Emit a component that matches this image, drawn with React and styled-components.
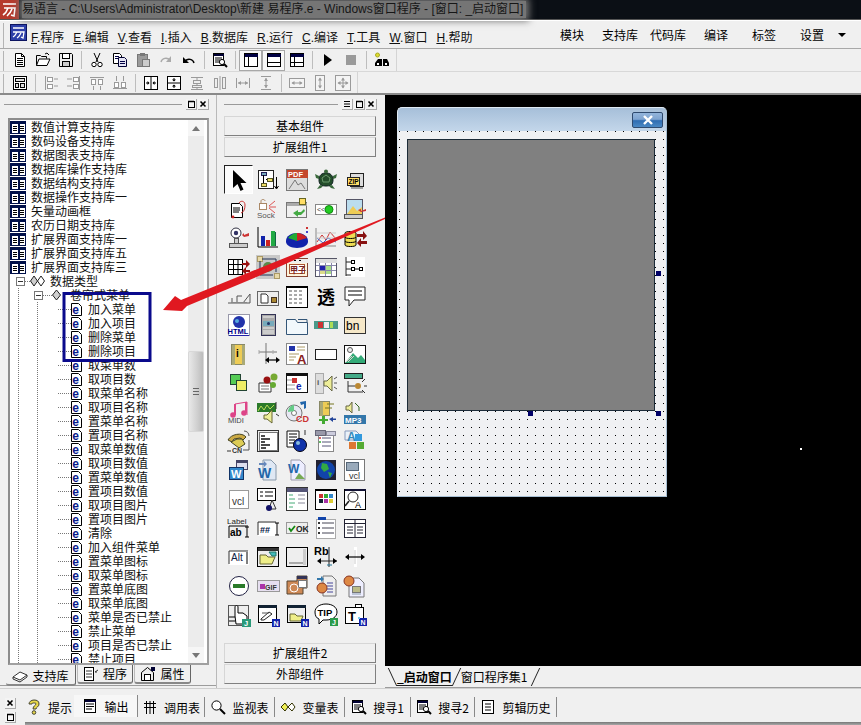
import React from 'react';
import styled, { createGlobalStyle } from 'styled-components';

const CJK = '"Noto Sans CJK SC", "Liberation Sans", sans-serif';
const LATIN = '"Liberation Sans", "Noto Sans CJK SC", sans-serif';

const GlobalStyle = createGlobalStyle`
  html, body { margin: 0; padding: 0; background: #000; }
  body { font-family: ${LATIN}; font-size: 12px; color: #000; }
`;

const r = (x, y, w, h, fill = 'none', stroke) => (
  <rect x={x} y={y} width={w} height={h} fill={fill} stroke={stroke} shapeRendering="crispEdges" />
);
const l = (d, stroke = '#000', sw = 1) => <path d={d} fill="none" stroke={stroke} strokeWidth={sw} />;
const f = (d, fill = '#000', stroke) => <path d={d} fill={fill} stroke={stroke} />;
const c = (x, y, rad, fill = 'none', stroke) => <circle cx={x} cy={y} r={rad} fill={fill} stroke={stroke} />;
const t = (x, y, size, s, fill = '#000', weight = 400) => (
  <text x={x} y={y} fontSize={size} fill={fill} fontWeight={weight} fontFamily="Liberation Sans, Noto Sans CJK SC, sans-serif">{s}</text>
);

// toolbar glyphs, 16 box
const G = '#9a9a9a';
const TOOLS = {
  doc: <>{f('M3.5 1.5h6l3 3v10h-9z', '#fff', '#000')}{l('M9.5 1.5v3h3M5 6.5h6M5 8.5h6M5 10.5h6M5 12.5h6')}</>,
  open: <>{l('M1.5 13.5v-10h4l1 1h5v2')}{f('M1.5 13.5l2.5-6.5h11l-3 6.5z', '#fff', '#000')}{l('M10 2l2-1 2 2')}</>,
  save: <>{f('M1.5 1.5h12l1 1v12h-13z', '#eee', '#000')}{r(4.5, 1.5, 7, 5, '#fff', '#000')}{r(4.5, 9.5, 7, 5, '#ccc', '#000')}</>,
  cut: <>{l('M5 1l4 9M11 1l-4 9')}{c(5, 12.5, 2.2, '#fff', '#000')}{c(11, 12.5, 2.2, '#fff', '#000')}</>,
  copy: <>{f('M1.5 1.5h6l2 2v8h-8z', '#fff', '#000')}{f('M6.5 5.5h6l2 2v7h-8z', '#e4e4f4', '#003')}{l('M3 4.5h4M3 6.5h3M8 9.5h5M8 11.5h5', '#004')}</>,
  paste: <>{r(2.5, 2.5, 10, 12, G, '#777')}{r(5, 1, 5, 3, '#777')}{r(7.5, 7.5, 7, 7, '#ccc', '#777')}</>,
  redo: <>{l('M3 10c1-4 6-5 9-2', '#aaa', 1.4)}{f('M13 4v6h-5z', '#aaa')}</>,
  undo: <>{l('M13 11c-1-4-6-5-9-2', '#000', 1.4)}{f('M2 5v6h6z')}</>,
  find: <>{r(1.5, 1.5, 10, 12, '#fff', '#000')}{r(1.5, 1.5, 10, 2, '#003')}{l('M3 6h7M3 8h5M3 10h4')}{c(10, 10, 2.6, '#fff', '#000')}{l('M12 12l3 3', '#000', 2)}</>,
  lay1: <>{r(1.5, 1.5, 13, 13, '#fff', '#000')}{r(1.5, 1.5, 13, 3, '#004')}{l('M5.5 4.5v10')}</>,
  lay2: <>{r(1.5, 1.5, 13, 13, '#fff', '#000')}{r(1.5, 1.5, 13, 3, '#004')}{l('M1.5 10.5h13')}</>,
  lay3: <>{r(1.5, 1.5, 13, 13, '#fff', '#000')}{r(1.5, 1.5, 13, 3, '#004')}{l('M5.5 4.5v10M1.5 10.5h13')}</>,
  play: f('M4 2l8 6-8 6z'),
  stop: r(3, 3, 10, 10, G),
  binoc: <>{c(3.5, 3, 2, '#dd3', '#aa2')}{f('M4 7h4v7H1v-3zM9 7h4l2 4v3H9z')}{r(6, 9, 4, 2)}{r(3, 11, 2, 2, '#fff')}{r(11, 11, 2, 2, '#fff')}</>,
  form: <>{r(1.5, 1.5, 13, 13, '#fff', '#000')}{r(3.5, 3.5, 9, 3, '#ddd', '#000')}{r(3.5, 8.5, 3, 4, '#ddd', '#000')}{r(8.5, 8.5, 4, 4, '#ddd', '#000')}</>,
  al: <>{l('M2.5 1v14', G)}{r(4.5, 2.5, 5, 4, '#fff', G)}{r(4.5, 9.5, 5, 4, '#fff', G)}{l('M11 4h4M11 11h4', G)}</>,
  ar: <>{l('M13.5 1v14', G)}{r(7.5, 2.5, 5, 4, '#fff', G)}{r(7.5, 9.5, 5, 4, '#fff', G)}{l('M1 4h5M1 11h5', G)}</>,
  at: <>{l('M1 2.5h14', G)}{r(2.5, 4.5, 4, 5, '#fff', G)}{r(9.5, 4.5, 4, 5, '#fff', G)}{l('M4.5 11v4M11.5 11v4', G)}</>,
  ab: <>{l('M1 13.5h14', G)}{r(2.5, 7.5, 4, 5, '#fff', G)}{r(9.5, 7.5, 4, 5, '#fff', G)}{l('M4.5 1v5M11.5 1v5', G)}</>,
  ch: <>{r(1.5, 1.5, 13, 13, '#fff', '#000')}{l('M8 1.5v13')}{l('M3 8h3M10 8h3')}{f('M6.5 8l-2-2v4zM9.5 8l2-2v4z')}</>,
  cv: <>{r(1.5, 1.5, 13, 13, '#fff', '#000')}{l('M1.5 8h13')}{l('M8 3v3M8 10v3')}{f('M8 6.5l-2-2h4zM8 9.5l-2 2h4z')}</>,
  cg: <>{l('M2 2.5h12M2 14.5h12M8 2v12', G)}{r(4.5, 5.5, 7, 3, '#eee', G)}{r(3.5, 10.5, 9, 2, '#eee', G)}</>,
  cu: <>{l('M8 1v14', G)}{r(2.5, 3.5, 3, 9, '#eee', G)}{r(10.5, 2.5, 3, 11, '#eee', G)}</>,
  sh: <>{l('M1.5 3v10M14.5 3v10M3 8h10', G)}{f('M3 8l3-2v4zM13 8l-3-2v4z', G)}</>,
  sv: <>{l('M3 1.5h10M3 14.5h10M8 3v10', G)}{f('M8 3l-2 3h4zM8 13l-2-3h4z', G)}</>,
  ew: <>{r(0.5, 3.5, 15, 9, '#f4f4f4', G)}{l('M3 8h10', G)}{f('M2.5 8l3-2v4zM13.5 8l-3-2v4z', G)}</>,
  eh: <>{r(3.5, 0.5, 9, 15, '#f4f4f4', G)}{l('M8 3v10', G)}{f('M8 2.5l-2 3h4zM8 13.5l-2-3h4z', G)}</>,
  eb: <>{r(0.5, 0.5, 15, 15, '#f4f4f4', G)}{l('M3 8h10M8 3v10', G)}{f('M2.5 8l3-2v4zM13.5 8l-3-2v4zM8 2.5l-2 3h4zM8 13.5l-2-3h4z', G)}</>,
};

const BAR_ICONS = {
  hint: <>{f('M8 1c-3 0-5 2-5 4h3c0-1 1-1 2-1s2 0 2 1-3 2-3 5h3c0-2 3-2 3-5s-2-4-5-4z', '#e8d84a', '#443')}{c(8, 13.5, 1.8, '#e8d84a', '#443')}</>,
  output: <>{r(2.5, 1.5, 11, 13, '#fff', '#000')}{r(2.5, 1.5, 11, 2, '#003')}{l('M4 6h8M4 8.5h8M4 11h6')}</>,
  calls: l('M4.5 2v13M8 2v13M11.5 2v13M2 4.5h12M2 8.5h12', '#000'),
  watch: <>{c(6.5, 6.5, 4.6, '#fff', '#000')}{l('M10 10l5 5', '#000', 2)}</>,
  vars: <>{f('M1 8l4-4 3 4-3 4z', '#ee5', '#330')}{f('M8 8l4-4 3 4-3 4z', '#fff', '#330')}</>,
  find: TOOLS.find,
  clip: <>{r(2.5, 1.5, 11, 13, '#fff', '#000')}{l('M5 5h6M5 8h6M5 11h6')}</>,
};

const xClose = <>{l('M2.5 2.5l5 5M7.5 2.5l-5 5', '#000', 1.6)}</>;

// component palette, 24 box, 16 rows by 5
const PALETTE = [
  f('M6 2v18l4.5-4 3 7 3-1.4-3-6.6h6z'),
  <>{r(2.5, 2.5, 15, 18, '#fff', '#222')}{r(5, 4, 5, 3, '#7ab', '#225')}{r(11, 10, 5, 3, '#ed6', '#552')}{r(5, 15, 5, 3, '#ed6', '#552')}{l('M7.5 7v8M10 11.5h1')}{l('M20.5 9v11M18.5 18l2 3 2-3')}</>,
  <>{r(1.5, 1.5, 21, 21, '#ddd', '#777')}{r(1.5, 1.5, 21, 8, '#c4472c')}{t(3, 8.5, 7.5, 'PDF', '#fff', 700)}{l('M4 21l6-9 3 5 3-2 4 6', '#777')}</>,
  <>{f('M5 12c0-5 3-7 7-7s7 2 7 7-3 6-7 6-7-1-7-6z', '#234d2a', '#122')}{c(12, 3.5, 2, '#3a6a3c')}{f('M5 8L1 6l1 4 3 1zM19 8l4-2-1 4-3 1zM6 17l-3 4 4-1 2-2zM18 17l3 4-4-1-2-2z', '#3a6a3c')}{l('M8 10l4-3 4 3-1 4H9z', '#6b9a6c')}</>,
  <>{r(7.5, 5.5, 13, 13, '#ddd', '#222')}{r(4.5, 9.5, 12, 8, '#fd6', '#222')}{t(5.5, 16, 6.5, 'ZIP', '#000', 700)}{l('M8 20h12', '#555')}</>,

  <>{f('M4.5 6.5h8l3 3v11h-11z', '#fff', '#000')}{l('M6 11h7M6 13h7M6 15h6')}{l('M12 6c2-3 6-2 6 2s-1 7-4 8', '#c33')}{c(6, 20, 1.4, '#c22')}</>,
  <>{r(3.5, 6.5, 7, 6, '#fff', '#a86')}{l('M5 6V4c0-2 4-2 4 0', '#a86')}{l('M13 9l6-5M13 10h7M13 11l6 5', '#d55')}{t(1, 21, 8, 'Sock', '#555')}</>,
  <>{r(1.5, 5.5, 20, 15, '#f0f0f0', '#777')}{r(1.5, 5.5, 20, 3, '#aaa')}{f('M8 16l5-3v2h3l3-3 1 2-4 4h-3v2z', '#4a4')}{r(14.5, 1.5, 6, 6, '#fd6', '#662')}</>,
  <>{r(1.5, 7.5, 21, 10, '#fff', '#888')}{t(3, 15, 7, '<<', '#444')}{c(15, 12.5, 4, '#2c2', '#181')}</>,
  <>{r(3.5, 2.5, 16, 15, '#bde', '#556')}{f('M4 17l6-8 4 5 5-4v7z', '#ec5')}{r(1.5, 17.5, 18, 4, '#ccc', '#555')}{f('M23 12l-5 2v-2l-3 1 3 2 5-1z', '#c33')}</>,

  <>{c(9, 7, 5, '#fff', '#334')}{c(9, 7, 2.2, '#336')}{r(2.5, 17.5, 18, 4, '#ccc', '#555')}{r(7, 12, 4, 5, '#ccc', '#555')}{f('M22 7l-5 2v-2l-2 2 2 2 5-1z', '#c33')}</>,
  <>{l('M2 1v20h20')}{r(5, 10, 4, 10, '#12a')}{r(10, 14, 4, 6, '#c22')}{r(15, 5, 4, 15, '#2a4')}{l('M19.5 6v14', '#164')}</>,
  <>{f('M1 15c0-5 5-8 11-8s11 3 11 8v1c0 3-5 6-11 6s-11-3-11-6z', '#12a')}{f('M12 15l-9-3c2-3 6-5 9-5z', '#2a3')}{f('M12 15V7c4 0 8 2 10 5z', '#c22')}{r(21, 1, 2, 2, '#c33')}{r(21, 5, 2, 2, '#44c')}</>,
  <>{l('M2 2v18h20', '#888')}{l('M3 16l5-7 4 5 4-8 6 7', '#c33')}{l('M3 12l6 5 5-5 8 4', '#36c')}{l('M3 7h19M3 12h19', '#ccc')}</>,
  <>{f('M2 7c0-2 11-2 11 0v12c0 2-11 2-11 0z', '#ed5', '#000')}{l('M2 11c0 2 11 2 11 0M2 15c0 2 11 2 11 0')}{f('M14 8h6V5l4 5-4 4v-3h-6z', '#811')}{f('M24 15h-6v-3l-4 5 4 4v-3h6z', '#811')}</>,

  <>{r(1.5, 4.5, 14, 15, '#fff', '#000')}{l('M1.5 9.5h14M1.5 14.5h14M6.5 4.5v15M11 4.5v15')}{f('M15 8h4V5l4 4-4 4v-3h-4z', '#911')}{f('M23 15h-4v-3l-4 4 4 4v-3h4z', '#911')}</>,
  <>{r(0, 0, 24, 24, '#c8c8c8')}{r(1, 1, 5, 5, '#e7d9a8', '#a96')}{r(18, 18, 5, 5, '#e7d9a8', '#a96')}{l('M6 4h14v13M4 6v14h13', '#235')}{c(12, 12, 5, '#5a8a4a')}</>,
  <>{r(1.5, 3.5, 21, 18, '#fdf4dc', '#843')}{r(1.5, 3.5, 21, 4, '#eee')}{l('M4 5.5h2M9 5.5h2M14 5.5h2')}{r(4.5, 9.5, 15, 9, '#fff', '#a53')}{t(5, 17.5, 8, '甲子', '#722', 700)}</>,
  <>{r(1.5, 3.5, 21, 18, '#fff', '#556')}{r(1.5, 3.5, 21, 4, '#ddd')}{r(6, 11, 5, 4, '#22a')}{r(12, 11, 5, 4, '#ad8')}{r(6, 16, 5, 3, '#dd8')}{r(12, 16, 5, 3, '#ad8')}{l('M5.5 8v13M11.5 8v13M17.5 8v13M2 10.5h20M2 15.5h20', '#88a')}</>,
  <>{r(2, 2, 20, 20, '#fff')}{l('M3 2v19h0M3 7h5M3 14h5M3 20h5', '#222')}{r(8.5, 5.5, 3, 3, '#fff', '#000')}{r(8.5, 12.5, 3, 3, '#fff', '#000')}{r(16.5, 12.5, 3, 3, '#fff', '#000')}{l('M12 14h4')}</>,

  <>{l('M1 19h22v-9l-7 9M15 12h-5v7M5 14v5', '#555')}{r(4, 18, 16, 1, '#888')}</>,
  <>{r(1.5, 7.5, 21, 14, '#eee', '#666')}{f('M5 10h5l2 2v7H5z', '#fff', '#333')}{r(15.5, 13.5, 5, 5, '#a83', '#432')}</>,
  <>{r(1.5, 2.5, 21, 21, '#fff', '#000')}{r(1.5, 1.5, 21, 2, '#000')}{l('M4 7h3M9 7h3M14 7h3M4 11h3M9 11h3M14 11h3M4 15h3M9 15h3M14 15h3M4 19h3M9 19h3M14 19h3', '#555')}</>,
  t(3, 20, 18, '透', '#000', 700),
  <>{f('M2 3h20v13H11l-5 6v-6H2z', '#fff', '#222')}{l('M5 7h14M5 11h14')}</>,

  <>{r(1.5, 1.5, 21, 21, '#fff', '#99a')}{c(12, 9, 6, '#23a')}{c(10, 8, 2, '#5ad')}{t(0.5, 21, 7.5, 'HTML', '#008', 700)}{l('M2 22.5h20', '#22a')}</>,
  <>{r(5.5, 1.5, 14, 21, '#aaa', '#335')}{r(7, 8, 11, 5, '#7ab')}{c(12.5, 10.5, 1.5, '#236')}{l('M7 4h11M7 15h11M7 18h11M7 20h11', '#eee')}</>,
  <>{f('M1.5 6.5h9l2 3h10v12h-21z', '#f2f8fc', '#357')}{l('M13 6.5h9v3', '#357')}</>,
  <>{r(0, 8, 24, 8, '#4a9a8a')}{r(4, 9, 5, 6, '#c33')}{r(10, 9, 5, 6, '#eee')}{r(16, 9, 3, 6, '#ad5')}</>,
  <>{r(1.5, 4.5, 21, 16, '#f6e8c8', '#333')}{t(3, 17, 12, 'bn', '#000')}</>,

  <>{r(4.5, 2.5, 13, 20, '#ec5', '#886')}{r(4.5, 2.5, 3, 20, '#aa7')}{r(14.5, 2.5, 3, 20, '#aa7')}{t(9, 15, 10, 'i', '#000', 700)}</>,
  <>{l('M10 1v21M3 10h18', '#777')}{l('M3 8v4M17 8v4', '#aaa')}{l('M11 18h11', '#000', 1.2)}{f('M9 18l4-3v6zM24 18l-4-3v6z')}</>,
  <>{r(1.5, 1.5, 21, 21, '#fff', '#888')}{r(4, 4, 6, 5, '#23a')}{l('M12 5h8M12 8h8M4 12h10M4 15h7M4 18h5', '#a96')}{t(12, 22, 13, 'A', '#822', 700)}</>,
  <>{r(1.5, 7.5, 21, 10, '#fff', '#222')}{r(5, 11, 2, 2)}{r(11, 11, 2, 2)}{r(17, 11, 2, 2)}</>,
  <>{r(1.5, 3.5, 21, 18, '#fff', '#111')}{f('M2 21l8-10 5 5 3-3 4 5v3z', '#3a7')}{c(7, 8, 2.5, '#eee', '#555')}{l('M3 20l6-6M5 20l6-6', '#dcc')}</>,

  <>{r(3.5, 3.5, 10, 10, '#5c5', '#243')}{r(9.5, 9.5, 10, 10, '#ee6', '#243')}</>,
  <>{f('M3 12l12 0 0 9H3z', '#fff', '#333')}{c(11, 9, 3.5, '#911')}{c(18, 6, 3.5, '#7a3')}{c(17, 14, 3, '#6a3')}{l('M5 15h8M5 18h8', '#777')}</>,
  <>{r(1.5, 2.5, 21, 19, '#fff', '#111')}{r(1.5, 2.5, 21, 2, '#111')}{r(7, 7, 5, 5, '#c33')}{t(11, 19, 10, 'e', '#12a', 700)}{l('M2 9h5M2 14h8M2 18h8', '#999')}</>,
  <>{r(1.5, 2.5, 8, 20, '#ddd', '#aaa')}{t(3, 14, 8, 'i', '#555', 700)}{f('M10 10h3l5-5v15l-5-5h-3z', '#ee9', '#664')}{l('M20 8l3-2M20 12h3M20 16l3 2', '#555')}</>,
  <>{r(1.5, 2.5, 18, 5, '#4a8', '#222')}{l('M5 10v11h15M5 15h7', '#333')}{c(15, 15, 3, '#b83')}{l('M19 11l3-3M19 19l3 3M21 15h3', '#333')}</>,

  <>{f('M8 4l12-2v13', 'none', '#d48')}{r(7, 4, 2, 11, '#d48')}{r(18, 2, 2, 11, '#d48')}{c(6, 15, 2.8, '#d48')}{c(17, 13, 2.8, '#d48')}{t(1, 23, 7.5, 'MIDI', '#444')}</>,
  <>{r(1, 3, 19, 9, '#2b7a2a')}{l('M2 11l3-5 3 4 3-5 3 4 4-4', '#bd5')}{f('M8 15h3l5-5v13l-5-4H8z', '#ee9', '#663')}{l('M20 2v7M20 14l3 2', '#333')}</>,
  <>{c(9, 13, 8, '#e8e8f4', '#777')}{c(9, 13, 2.5, '#fff', '#777')}{f('M9 5v6l-6 1c0-4 3-7 6-7z', '#6c8')}{t(11, 22, 9, 'CD', '#c33', 700)}{f('M15 2l6-1v7l-2 1V4l-3 1z', '#26a')}</>,
  <>{r(5.5, 1.5, 10, 14, '#ec5', '#886')}{r(5.5, 1.5, 3, 14, '#aa7')}{l('M13 4h7M11 8h7', '#772')}{f('M8 16h3v3h3v2h-3v3H8v-3H5v-2h3z', '#4a3')}{f('M15 19l4-2v1.5h3v1.5h-3v2z', '#249')}</>,
  <>{f('M3 6h3l3-4v11l-3-3H3z', '#ee9', '#664')}{l('M12 3l4 4v4', '#362')}{r(1, 15, 22, 9, '#37a')}{t(2, 23, 8, 'MP3', '#fff', 700)}</>,

  <>{f('M1 11c3-6 14-8 18-3l-3 3-3-2-6 1-2 3z', '#ca4', '#442')}{f('M4 13l6-3h5l3 5-6 4z', '#dc5', '#442')}{l('M17 2c3 0 5 2 5 5M22 11v10h-6', '#555')}{t(5, 24, 7, 'CN', '#333', 700)}{l('M0 22h4', '#333')}</>,
  <>{r(1.5, 1.5, 21, 21, '#eee', '#333')}{r(3, 3, 18, 18, '#fff', '#777')}{l('M5 7h4M5 10h9M5 13h4M5 16h9M5 19h5', '#111', 1.5)}</>,
  <>{f('M2 2h12v16H2z', '#fff', '#111')}{l('M4 5h8M4 8h8M4 11h6M4 14h5')}{c(15, 16, 6.5, '#13a', '#001')}{c(13, 14, 2, '#8bd')}{l('M20 1v5', '#333')}</>,
  <>{r(4.5, 3.5, 15, 19, '#fff', '#888')}{r(1, 1, 10, 5, '#99a', '#667')}{r(12, 2, 9, 4, '#ccd', '#889')}{l('M8 9h9M8 13h9M8 17h9', '#557')}{c(6, 9, 1, '#c33')}{c(6, 13, 1, '#3a3')}</>,
  <>{f('M2 2h11l4 4v5H2z', '#eaf2fa', '#89b')}{t(4, 12, 12, 'A', '#38b', 700)}{r(12, 5, 7, 7, '#39d')}{r(6, 13, 7, 7, '#d73')}{r(14, 13, 7, 7, '#5a3')}</>,

  <>{r(9.5, 2.5, 11, 9, '#dde', '#446')}{r(9.5, 2.5, 11, 2, '#446')}{r(2.5, 9.5, 14, 12, '#38c', '#136')}{t(4, 20, 11, 'W', '#fff', 700)}</>,
  <>{f('M7 2h8l5 5v15H7z', '#dfe8f4', '#89a')}{t(2, 20, 14, 'W', '#26a', 700)}{f('M3 5h5V3l3 3-3 3V7H3z', '#68b')}</>,
  <>{f('M6 2h9l5 5v15H6z', '#eef', '#99a')}{t(3, 15, 12, 'W', '#26a', 700)}{f('M10 21l4-6 3 3 3 3z', '#7a5')}</>,
  <>{r(2, 2, 20, 20, '#223')}{c(12, 12, 9, '#14a')}{f('M8 5l5 1 2 5-5 3-3-4zM14 14l4 1-2 5z', '#3a4')}</>,
  <>{r(1.5, 1.5, 20, 21, '#fff', '#777')}{r(3.5, 4, 12, 8, '#9ab', '#567')}{t(6, 21, 9, 'vcl', '#333')}</>,

  <>{r(2.5, 3.5, 19, 18, '#fff', '#999')}{t(5, 18, 10, 'vcl', '#333')}</>,
  <>{r(1.5, 1.5, 18, 12, '#fff', '#000')}{l('M4 5h3M4 9h3M9 5h8M9 9h8')}{l('M16 13l-3 9h7z', '#333')}{c(13, 21, 3, '#116')}</>,
  <>{r(1.5, 0.5, 21, 23, '#fff', '#333')}{r(1.5, 0.5, 21, 4, '#557')}{l('M4 8h4M4 12h6M4 16h6M4 20h4', '#4a7')}{l('M13 8h7M13 12h7M13 16h7', '#889')}</>,
  <>{r(1.5, 2.5, 21, 20, '#fff', '#000')}{r(1.5, 1.5, 21, 2, '#000')}{r(5, 7, 4, 4, '#c33')}{r(10, 7, 4, 4, '#3a3')}{r(15, 7, 4, 4, '#38c')}{r(5, 12, 4, 4, '#123')}{r(10, 12, 4, 4, '#a3a')}{r(15, 12, 4, 4, '#dc3')}</>,
  <>{r(1.5, 2.5, 21, 20, '#fff', '#000')}{r(1.5, 1.5, 21, 2, '#113')}{c(10, 10, 5, '#fff', '#222')}{l('M6 14l-4 5', '#222', 1.6)}{t(12, 21, 9, 'A', '#000')}</>,

  <>{t(0, 8, 8, 'Label', '#222')}{r(1.5, 9.5, 20, 12, '#eee')}{l('M2 10h19M2 10v12', '#000')}{t(3, 20, 10, 'ab', '#000', 700)}{l('M20 11v10M18 11h4M18 21h4')}</>,
  <>{r(1.5, 6.5, 20, 13, '#fff')}{l('M2 19V6h18', '#333')}{t(4, 17, 9, '##', '#014', 700)}{l('M21 7v12M19 7h4M19 19h4')}</>,
  <>{r(1.5, 6.5, 21, 11, '#eee', '#999')}{l('M4 12l2 3 4-5', '#181', 1.8)}{t(11, 16, 8.5, 'OK', '#222', 700)}</>,
  <>{r(2.5, 3.5, 19, 19, '#fff', '#aaa')}{r(4, 1, 8, 3, '#14a')}{l('M8 7h12M8 12h12M8 17h12', '#445')}{r(4, 6, 2, 2, '#333')}{r(4, 11, 2, 2, '#333')}{r(4, 16, 2, 2, '#333')}</>,
  <>{r(1.5, 3.5, 21, 18, '#fff', '#223')}{l('M12 3.5v18M1.5 7.5h21M4 11h6M4 14h6M4 17h6M14 11h6M14 14h6M14 17h6', '#223')}</>,

  <>{r(1.5, 5.5, 20, 14, '#fff')}{l('M2 19V6h19', '#333')}{t(4, 16, 10, 'Alt', '#124')}{l('M20 7v12', '#000')}</>,
  <>{r(1.5, 2.5, 21, 19, '#eee', '#000')}{r(1.5, 2.5, 21, 3, '#333')}{f('M4 10h6l2 2h7l-3 7H4z', '#ee8', '#663')}{f('M13 7h7v4h-4z', '#4bb', '#276')}</>,
  <>{r(1.5, 2.5, 21, 19, '#eee', '#000')}{r(18, 4, 3, 16, '#ccc')}{l('M4 18h14', '#666')}</>,
  <>{t(0, 10, 11, 'Rb', '#000', 700)}{l('M15 2v20M5 16h18', '#222')}{f('M3 16l4-3v6zM23 16l-4-3v6z')}{l('M13 20h5', '#279')}</>,
  <>{r(11, 2, 3, 20, '#fff')}{l('M12 5v14', '#ccc')}{l('M4 12h16', '#000', 1.2)}{f('M2 12l4-3v6zM22 12l-4-3v6z')}</>,

  <>{c(12, 12, 9.5, '#fff', '#224')}{r(6, 10, 12, 4, '#2a7a2a')}</>,
  <>{r(1.5, 6.5, 22, 11, '#e6dff0', '#999')}{r(3.5, 9.5, 5, 5, '#a3a')}{t(9, 16, 7, 'GIF', '#333', 700)}</>,
  <>{f('M12 2h10v12h-4v6H2V7h10z', '#c85', '#543')}{r(12, 2, 10, 3, '#335')}{r(13, 6, 8, 7, '#fff', '#777')}{c(9, 14, 4, 'none', '#fff')}</>,
  <>{f('M9 2h9l4 4v16H9z', '#eee', '#777')}{l('M13 9h6M13 12h6M13 15h6M13 18h6', '#449')}{c(8, 14, 5, '#d84', '#832')}{f('M3 4h4V2l3 3-3 3V6H3z', '#37a')}</>,
  <>{f('M6 4h10l5 5v14H6z', '#eef', '#777')}{c(6, 7, 5, '#d84', '#832')}{r(9, 12, 8, 6, '#bb8', '#777')}{l('M9 20h9', '#89a')}</>,

  <>{r(1, 2, 20, 20, '#eee', '#555')}{f('M8 13V4c0-2 3-2 3 0v6h5l4 3v5l-3 3H9z', '#fff', '#000')}{l('M2 14h6M2 18h6')}{r(15, 16, 9, 8, '#2a9a7a')}{t(17, 23, 7.5, 'J', '#fff', 700)}</>,
  <>{r(2.5, 2.5, 18, 17, '#fff', '#000')}{r(2.5, 2, 18, 3, '#123')}{f('M5 16l8-7 3 2-8 6H5z', '#fff', '#222')}{l('M6 10h7', '#555')}{r(16, 16, 8, 8, '#12a')}{t(17.5, 23, 7, 'N', '#fff', 700)}</>,
  <>{r(2.5, 2.5, 18, 17, '#eee', '#000')}{r(2.5, 2, 18, 3, '#123')}{f('M5 11h5l2 2h6l-2 5H5z', '#ee8', '#663')}{r(16, 16, 8, 8, '#12a')}{t(17.5, 23, 7, 'N', '#fff', 700)}</>,
  <>{f('M12 1c6 0 11 3 11 8s-5 8-11 8H9l-4 4v-5c-3-1-4-4-4-7 0-5 5-8 11-8z', '#fff', '#000')}{t(3.5, 12.5, 9.5, 'TIP', '#000', 700)}{r(16, 15, 8, 8, '#2a9a4a')}{t(18, 22, 7, 'J', '#fff', 700)}</>,
  <>{r(2.5, 4.5, 18, 16, '#fff', '#000')}{r(12.5, 1.5, 6, 3, '#fff', '#000')}{t(5, 18, 13, 'T', '#000', 700)}{r(16, 15, 8, 8, '#12a')}{r(15, 14, 2, 2, '#7ce')}{t(17.5, 22, 7, 'N', '#fff', 700)}</>,
];

const Screen = styled.div`
  position: relative;
  width: 861px;
  height: 725px;
  overflow: hidden;
  display: flex;
  flex-direction: column;
  background: #f0f0f0;
`;

const TitleBar = styled.div`
  flex: none;
  height: 19px;
  display: flex;
  align-items: center;
  background: #0b0f15;
  border-bottom: 1px solid #555;
`;

const TitleIcon = styled.svg`
  flex: none;
  width: 19px;
  height: 19px;
`;

const TitleText = styled.span`
  margin-left: 3px;
  height: 17px;
  line-height: 17px;
  padding-right: 3px;
  font-family: ${LATIN};
  font-size: 12px;
  white-space: nowrap;
  color: #161616;
  background: #757575;
  box-shadow: 0 0 7px 3px #757575;
`;

const MenuBar = styled.div`
  flex: none;
  height: 27px;
  display: flex;
  align-items: center;
  border-top: 1px solid #fff;
  border-bottom: 1px solid #a8a8a8;
`;

const Gripper = styled.span`
  flex: none;
  align-self: stretch;
  width: 1px;
  margin: 2px 0 0 3px;
  background: #b4b4b4;
`;

const MenuLogo = styled.svg`
  flex: none;
  width: 17px;
  height: 17px;
  margin: -5px 4px 0 6px;
`;

const MenuItem = styled.span`
  margin: 4px 9px 0 0;
  white-space: nowrap;
  color: #111;
  & > u { text-underline-offset: 1px; }
`;

const ViewSwitch = styled.div`
  display: flex;
  align-items: center;
  margin-left: auto;
  padding-right: 15px;
`;

const SwitchItem = styled.span`
  width: 48px;
  text-align: center;
  font-family: ${CJK};
  line-height: 16px;
`;

const SwitchArrow = styled.span`
  width: 0;
  height: 0;
  margin-left: 2px;
  border: 4px solid transparent;
  border-top: 4px solid #000;
  border-bottom: 0;
`;

const ToolRow = styled.div`
  flex: none;
  height: 23px;
  display: flex;
  align-items: stretch;
  border-bottom: ${p => (p.$last ? '2px solid #8a8a8a' : '1px solid #d8d8d8')};
  box-sizing: border-box;
`;

const ToolGroup = styled.div`
  display: flex;
  align-items: center;
  padding-left: 4px;
  padding-right: 3px;
  border-right: 1px solid #d4d4d4;
`;

const ToolButton = styled.span`
  box-sizing: border-box;
  width: 23px;
  height: 21px;
  display: flex;
  align-items: center;
  justify-content: center;
  background: ${p => (p.$pressed ? '#f8f8f8' : 'transparent')};
  border: 1px solid ${p => (p.$pressed ? '#a8a8a8' : 'transparent')};
`;

const ToolSvg = styled.svg`
  width: 16px;
  height: 16px;
`;

const ToolSep = styled.span`
  width: 1px;
  height: 18px;
  margin: 0 3.5px;
  background: #bdbdbd;
`;

const Main = styled.div`
  flex: 1;
  min-height: 0;
  display: flex;
`;

const DockLeft = styled.div`
  flex: none;
  box-sizing: border-box;
  width: 217px;
  display: flex;
  flex-direction: column;
  border-right: 1px solid #b9b9b9;
  padding: 4px 7px 0 0;
`;

const DockHead = styled.div`
  flex: none;
  height: 11px;
  display: flex;
  align-items: center;
  gap: 1px;
  padding-left: ${p => p.$pad}px;
`;

const DockLine = styled.span`
  flex: 1;
  height: 1px;
  margin-right: 3px;
  background: #9a9a9a;
`;

const DockButton = styled.svg`
  flex: none;
  width: 11px;
  height: 11px;
  background: #f4f4f4;
  border-right: 1px solid #aaa;
  border-bottom: 1px solid #aaa;
  box-sizing: border-box;
`;

const TreeFrame = styled.div`
  flex: none;
  box-sizing: border-box;
  position: relative;
  width: 201px;
  height: 547px;
  margin: 8px 0 0 8px;
  overflow: hidden;
  background: #fff;
  border: 2px solid #8c8c8c;
  border-right-color: #a0a0a0;
  border-bottom-color: #a0a0a0;
`;

const TreeRow = styled.div`
  height: 14px;
  display: flex;
  align-items: center;
  padding-left: ${p => p.$indent}px;
  white-space: nowrap;
  font-family: ${CJK};
  font-size: 12px;
  line-height: 14px;
  color: #111;
  background-image: ${p => (p.$guides || []).map(() => 'repeating-linear-gradient(#777 0 1px, transparent 1px 2px)').join(',') || 'none'};
  background-size: 1px 100%;
  background-repeat: no-repeat;
  background-position: ${p => (p.$guides || []).map(x => `${x}px 0`).join(',') || '0 0'};
`;

const Expander = styled.span`
  flex: none;
  box-sizing: border-box;
  width: 9px;
  height: 9px;
  background: linear-gradient(#333, #333) center / 5px 1px no-repeat, #fff;
  border: 1px solid #777;
`;

const Stub = styled.span`
  flex: none;
  width: ${p => p.$w}px;
  height: 1px;
  background: repeating-linear-gradient(90deg, #777 0 1px, transparent 1px 2px);
`;

const BookIcon = styled.svg`
  flex: none;
  width: 16px;
  height: 13px;
  margin-right: 5px;
`;

const TypeIcon = styled.svg`
  flex: none;
  width: ${p => p.$w}px;
  height: 12px;
  margin-right: ${p => p.$gap}px;
`;

const LeafIcon = styled.svg`
  flex: none;
  width: 11px;
  height: 13px;
  margin-right: 6px;
`;

const Scroll = styled.div`
  position: absolute;
  top: 0;
  right: 3px;
  bottom: 0;
  width: 16px;
  display: flex;
  flex-direction: column;
  background: #ececec;
`;

const ScrollEnd = styled.span`
  flex: none;
  height: 16px;
  display: flex;
  align-items: center;
  justify-content: center;
  background: #f6f6f6;
  &::after {
    content: '';
    border: 4px solid transparent;
    ${p => (p.$up ? 'border-bottom: 5px solid #777; border-top: 0;' : 'border-top: 5px solid #777; border-bottom: 0;')}
  }
`;

const ScrollThumb = styled.span`
  flex: none;
  height: 81px;
  margin-top: 215px;
  display: flex;
  align-items: center;
  justify-content: center;
  box-sizing: border-box;
  background: linear-gradient(90deg, #e8e8e8, #cfcfcf 60%, #bcbcbc);
  border: 1px solid #d8d8d8;
  border-radius: 2px;
  &::after {
    content: '';
    width: 6px;
    height: 7px;
    background: repeating-linear-gradient(#666 0 1px, transparent 1px 3px);
  }
`;

const ScrollGap = styled.span`
  flex: 1;
`;

const LeftTabs = styled.div`
  flex: none;
  height: 21px;
  box-sizing: border-box;
  display: flex;
  align-items: flex-start;
  padding-left: 6px;
  border-bottom: 1px solid #9c9c9c;
  margin-right: -7px;
`;

const LeftTab = styled.div`
  box-sizing: border-box;
  width: ${p => p.$w}px;
  height: ${p => (p.$active ? 21 : 19)}px;
  display: flex;
  align-items: center;
  justify-content: center;
  gap: 4px;
  font-family: ${CJK};
  font-size: 12px;
  margin-right: 1px;
  border-right: 1px solid #666;
  border-bottom: 2px solid #888;
  border-left: ${p => (p.$active ? 'none' : '1px solid #bbb')};
  border-radius: 0 0 3px 3px;
  padding-top: ${p => (p.$active ? 2 : 0)}px;
`;

const SmallIcon = styled.svg`
  flex: none;
  width: 16px;
  height: 16px;
`;

const DockPalette = styled.div`
  flex: none;
  box-sizing: border-box;
  width: 168px;
  display: flex;
  flex-direction: column;
  padding: 4px 8px 4px 7px;
`;

const GroupButton = styled.div`
  flex: none;
  box-sizing: border-box;
  height: 20px;
  width: 152px;
  display: flex;
  align-items: center;
  justify-content: center;
  font-family: ${CJK};
  font-size: 12px;
  line-height: 16px;
  background: #f0f0f0;
  border: 1px solid #d6d6d6;
  border-right-color: #808080;
  border-bottom-color: #808080;
  margin-top: ${p => p.$top || 1}px;
`;

const PaletteGrid = styled.div`
  flex: none;
  display: grid;
  grid-template-columns: repeat(5, 29px);
  grid-auto-rows: 29px;
  margin: 8px 0 0 0;
`;

const PaletteCell = styled.span`
  box-sizing: border-box;
  display: flex;
  align-items: center;
  justify-content: center;
  ${p => p.$selected && `
    background: #fbfbfb;
    border: 1px solid #fff;
    border-top-color: #222;
    border-left-color: #222;
  `}
`;

const PaletteSvg = styled.svg`
  width: 24px;
  height: 24px;
  overflow: visible;
`;

const PaletteGap = styled.div`
  flex: 1;
`;

const Workspace = styled.div`
  flex: 1;
  min-width: 0;
  display: flex;
  flex-direction: column;
`;

const Canvas = styled.div`
  position: relative;
  flex: 1;
  min-height: 0;
  background: #000;
  padding: 12px 0 0 12px;
`;

const StrayDot = styled.span`
  position: absolute;
  left: 415px;
  top: 353px;
  width: 2px;
  height: 2px;
  background: #fff;
`;

const FormWindow = styled.div`
  box-sizing: border-box;
  width: 270px;
  height: 390px;
  display: flex;
  flex-direction: column;
  border: 1px solid #dfeaf4;
  border-right-color: #a8c0d4;
  border-bottom-color: #a8c0d4;
  border-radius: 5px 5px 0 0;
  background: #f0f1f3;
  overflow: hidden;
`;

const FormTitle = styled.div`
  flex: none;
  box-sizing: border-box;
  height: 23px;
  display: flex;
  justify-content: flex-end;
  align-items: flex-start;
  padding: 4px 3px 0 0;
  background: linear-gradient(#a6bfd9, #c3d6ea);
`;

const FormClose = styled.span`
  box-sizing: border-box;
  width: 31px;
  height: 16px;
  display: flex;
  align-items: center;
  justify-content: center;
  border: 1px solid #2f4a6e;
  border-radius: 2px;
  background: linear-gradient(#93b5db 0, #7fa4d0 45%, #2f6db2 55%, #4a88c4 100%);
  color: #fff;
`;

const FormBody = styled.div`
  position: relative;
  flex: 1;
  padding: 8px 0 0 9px;
  background-image: radial-gradient(circle at 1.5px 0.5px, #000 0.7px, transparent 0.8px);
  background-size: 8px 8px;
`;

const GrayControl = styled.div`
  box-sizing: border-box;
  width: 248px;
  height: 272px;
  background: #808080;
  border: 1px solid #1c2b38;
`;

const Handle = styled.span`
  position: absolute;
  left: ${p => p.$x}px;
  top: ${p => p.$y}px;
  width: 5px;
  height: 5px;
  background: #000066;
`;

const DocTabs = styled.div`
  flex: none;
  height: 21px;
  display: flex;
  align-items: center;
  padding-left: 3px;
  background: #f0f0f0;
  border-bottom: 1px solid #9c9c9c;
  font-family: ${CJK};
  font-size: 12px;
`;

const Slant = styled.span`
  flex: none;
  width: 1px;
  height: 18px;
  margin: 0 ${p => p.$m || 4}px;
  background: #222;
  transform: skewX(${p => p.$deg}deg);
`;

const DocTab = styled.span`
  font-weight: ${p => (p.$active ? 700 : 400)};
  white-space: nowrap;
  border-bottom: ${p => (p.$active ? '1px solid #222' : 'none')};
  line-height: 17px;
`;

const BottomBar = styled.div`
  flex: none;
  height: 37px;
  display: flex;
  border-top: 1px solid #cfcfcf;
  box-sizing: border-box;
`;

const BottomGrip = styled.div`
  flex: none;
  width: 25px;
  display: flex;
  flex-direction: column;
  align-items: center;
  gap: 3px;
  padding: 9px 4px 0 0;
  box-sizing: border-box;
`;

const BottomMain = styled.div`
  flex: 1;
  display: flex;
  flex-direction: column;
`;

const BottomTabs = styled.div`
  flex: 1;
  display: flex;
  align-items: flex-start;
  padding-top: 7px;
`;

const BottomTab = styled.div`
  box-sizing: border-box;
  flex: none;
  width: ${p => p.$w}px;
  height: ${p => (p.$active ? 22 : 20)}px;
  margin-top: ${p => (p.$active ? -1 : 1)}px;
  display: flex;
  align-items: center;
  justify-content: center;
  gap: 6px;
  font-family: ${CJK};
  font-size: 12px;
  border-right: 1px solid ${p => (p.$plain ? 'transparent' : '#888')};
  background: ${p => (p.$active ? '#f7f7f7' : 'transparent')};
`;

const BottomEdge = styled.div`
  flex: none;
  height: 3px;
  background: linear-gradient(#777, #a8a8a8);
`;

const Overlay = styled.svg`
  position: absolute;
  left: 0;
  top: 0;
  width: 861px;
  height: 725px;
  pointer-events: none;
`;

const TOOLBAR_1 = [
  ['doc', 'open', 'save'], ['cut', 'copy', 'paste', 'redo', 'undo'], ['find'],
  ['lay1', 'lay2', 'lay3'], ['play', 'stop'], ['binoc'],
];
const TOOLBAR_2 = [
  ['form'], ['al', 'ar', 'at', 'ab'], ['ch', 'cv', 'cg', 'cu', 'sh', 'sv'], ['ew', 'eh', 'eb'],
];
const PRESSED = ['lay1', 'lay2'];

const MENUS = [
  ['F', '.程序'], ['E', '.编辑'], ['V', '.查看'], ['I', '.插入'], ['B', '.数据库'],
  ['R', '.运行'], ['C', '.编译'], ['T', '.工具'], ['W', '.窗口'], ['H', '.帮助'],
];
const SWITCHES = ['模块', '支持库', '代码库', '编译', '标签', '设置'];

const LIBS = [
  '数值计算支持库', '数码设备支持库', '数据图表支持库', '数据库操作支持库', '数据结构支持库',
  '数据操作支持库一', '矢量动画框', '农历日期支持库', '扩展界面支持库一', '扩展界面支持库五', '扩展界面支持库三',
];
const LEAVES = [
  '加入菜单', '加入项目', '删除菜单', '删除项目', '取菜单数', '取项目数', '取菜单名称', '取项目名称',
  '置菜单名称', '置项目名称', '取菜单数值', '取项目数值', '置菜单数值', '置项目数值', '取项目图片',
  '置项目图片', '清除', '加入组件菜单', '置菜单图标', '取菜单图标', '置菜单底图', '取菜单底图',
  '菜单是否已禁止', '禁止菜单', '项目是否已禁止', '禁止项目',
];
const BOTTOM_TABS = [
  { icon: 'hint', label: '提示', w: 49, plain: true },
  { icon: 'output', label: '输出', w: 64, active: true },
  { icon: 'calls', label: '调用表', w: 67 },
  { icon: 'watch', label: '监视表', w: 70 },
  { icon: 'vars', label: '变量表', w: 70 },
  { icon: 'find', label: '搜寻1', w: 66 },
  { icon: 'find', label: '搜寻2', w: 64 },
  { icon: 'clip', label: '剪辑历史', w: 82 },
];

function Toolbar({ groups, last }) {
  return (
    <ToolRow $last={last}>
      <Gripper />
      <ToolGroup>
        {groups.map((group, i) => (
          <React.Fragment key={i}>
            {i > 0 && <ToolSep />}
            {group.map(name => (
              <ToolButton key={name} $pressed={PRESSED.includes(name)}>
                <ToolSvg viewBox="0 0 16 16">{TOOLS[name]}</ToolSvg>
              </ToolButton>
            ))}
          </React.Fragment>
        ))}
      </ToolGroup>
    </ToolRow>
  );
}

function Book() {
  return (
    <BookIcon viewBox="0 0 16 13">
      {r(0.5, 0.5, 15, 12, '#fff', '#00104a')}
      {r(0, 0, 16, 3, '#00104a')}
      {r(0, 3, 2, 10, '#00104a')}
      {l('M3 5.5h4M3 7.5h4M3 9.5h4M10 5.5h4M10 7.5h4M10 9.5h4', '#000')}
      {r(7.5, 3, 2, 10, '#00104a')}
    </BookIcon>
  );
}

function Leaf() {
  return (
    <LeafIcon viewBox="0 0 11 13">
      {f('M0.5 0.5h7l3 3v9h-10z', '#fff', '#000')}
      <text x="1.2" y="10.8" fontSize="12" fontWeight="700" fill="#0a1a8a" fontFamily="Liberation Sans, sans-serif">e</text>
    </LeafIcon>
  );
}

function DockButtons({ menu }) {
  return (
    <>
      {menu && <DockButton viewBox="0 0 10 10">{l('M2 2.5h6M2 5h6M2 7.5h6')}</DockButton>}
      <DockButton viewBox="0 0 10 10">{r(2, 2, 6, 6, 'none', '#000')}{l('M2 2.5h6', '#000', 1.5)}</DockButton>
      <DockButton viewBox="0 0 10 10">{xClose}</DockButton>
    </>
  );
}

function Tree() {
  return (
    <TreeFrame>
      {LIBS.map(name => (
        <TreeRow key={name} $indent={0}><Book />{name}</TreeRow>
      ))}
      <TreeRow $indent={6}>
        <Expander />
        <Stub $w={5} />
        <TypeIcon $w={15} $gap={5} viewBox="0 0 15 12">
          {f('M0.5 6l3.5-5 3.5 5-3.5 5z', '#cfcfcf', '#222')}
          {f('M7.5 6l3.5-5 3.5 5-3.5 5z', '#fff', '#222')}
        </TypeIcon>
        数据类型
      </TreeRow>
      <TreeRow $indent={24} $guides={[8]}>
        <Expander />
        <Stub $w={9} />
        <TypeIcon $w={9} $gap={9} viewBox="0 0 9 12">
          {f('M0.5 6l4-5 4 5-4 5z', '#cfcfcf', '#222')}
        </TypeIcon>
        卷帘式菜单
      </TreeRow>
      {LEAVES.map(name => (
        <TreeRow key={name} $indent={48} $guides={[8, 27]}>
          <Stub $w={13} />
          <Leaf />
          {name}
        </TreeRow>
      ))}
      <Scroll>
        <ScrollEnd $up />
        <ScrollThumb />
        <ScrollGap />
        <ScrollEnd />
      </Scroll>
    </TreeFrame>
  );
}

export default function App() {
  return (
    <Screen>
      <GlobalStyle />
      <TitleBar>
        <TitleIcon viewBox="0 0 19 19">
          {r(0, 0, 19, 19, '#b5392c')}
          {l('M3 4h13M4 8h11l-1 8-3-1M8 8c-1 3-2 5-5 7M12 9c-1 3-3 5-5 7', '#fff', 1.6)}
        </TitleIcon>
        <TitleText>易语言 - C:\Users\Administrator\Desktop\新建 易程序.e - Windows窗口程序 - [窗口: _启动窗口]</TitleText>
      </TitleBar>
      <MenuBar>
        <Gripper />
        <MenuLogo viewBox="0 0 17 17">
          {r(0.5, 0.5, 16, 16, '#2d3fa8', '#0c1460')}
          {l('M3 4h11M3 8h11l-1 6-2-1M7 8c-1 2-2 4-4 5M11 9c-1 2-2 4-4 5', '#fff', 1.3)}
        </MenuLogo>
        {MENUS.map(([key, label]) => (
          <MenuItem key={key}><u>{key}</u>{label}</MenuItem>
        ))}
        <ViewSwitch>
          {SWITCHES.map(name => <SwitchItem key={name}>{name}</SwitchItem>)}
          <SwitchArrow />
        </ViewSwitch>
      </MenuBar>
      <Toolbar groups={TOOLBAR_1} />
      <Toolbar groups={TOOLBAR_2} last />
      <Main>
        <DockLeft>
          <DockHead $pad={4}>
            <DockLine />
            <DockButtons />
          </DockHead>
          <Tree />
          <LeftTabs>
            <LeftTab $active $w={70}>
              <SmallIcon viewBox="0 0 16 16">
                {f('M1 9l7-5 7 3-7 5z', '#fff', '#333')}
                {l('M1 11l7 3 7-5M1 9v2M15 7v2', '#333')}
              </SmallIcon>
              支持库
            </LeftTab>
            <LeftTab $w={56}>
              <SmallIcon viewBox="0 0 16 16">
                {r(1.5, 1.5, 9, 13, '#fff', '#000')}
                {l('M3 5h6M3 8h6M3 11h6M12 6l3-2M12 6h2', '#333')}
              </SmallIcon>
              程序
            </LeftTab>
            <LeftTab $w={57}>
              <SmallIcon viewBox="0 0 16 16">
                {f('M1.5 6.5l6-5 6 5v8h-12z', '#eee', '#000')}
                {r(4.5, 8.5, 6, 6, '#fff', '#000')}
                {r(11, 1, 4, 4, '#003')}
              </SmallIcon>
              属性
            </LeftTab>
          </LeftTabs>
        </DockLeft>

        <DockPalette>
          <DockHead $pad={0}>
            <DockLine />
            <DockButtons menu />
          </DockHead>
          <GroupButton $top={6}>基本组件</GroupButton>
          <GroupButton>扩展组件1</GroupButton>
          <PaletteGrid>
            {PALETTE.map((icon, i) => (
              <PaletteCell key={i} $selected={i === 0}>
                <PaletteSvg viewBox="0 0 24 24">{icon}</PaletteSvg>
              </PaletteCell>
            ))}
          </PaletteGrid>
          <PaletteGap />
          <GroupButton>扩展组件2</GroupButton>
          <GroupButton>外部组件</GroupButton>
        </DockPalette>

        <Workspace>
          <Canvas>
            <FormWindow>
              <FormTitle>
                <FormClose>
                  <svg width="14" height="10" viewBox="0 0 14 10">{l('M3 1l8 8M11 1l-8 8', '#fff', 2.4)}</svg>
                </FormClose>
              </FormTitle>
              <FormBody>
                <GrayControl />
                <Handle $x={130} $y={280} />
                <Handle $x={258} $y={280} />
                <Handle $x={258} $y={140} />
              </FormBody>
            </FormWindow>
            <StrayDot />
          </Canvas>
          <DocTabs>
            <Slant $deg={25} />
            <DocTab $active>_启动窗口</DocTab>
            <Slant $deg={-25} />
            <DocTab>窗口程序集1</DocTab>
            <Slant $deg={-25} $m={8} />
          </DocTabs>
        </Workspace>
      </Main>
      <BottomBar>
        <BottomGrip>
          <DockButton viewBox="0 0 10 10">{xClose}</DockButton>
          <DockButton viewBox="0 0 10 10">{r(2, 2, 6, 6, 'none', '#000')}{l('M2 2.5h6', '#000', 1.5)}</DockButton>
        </BottomGrip>
        <BottomMain>
          <BottomTabs>
            {BOTTOM_TABS.map(tab => (
              <BottomTab key={tab.label} $w={tab.w} $active={tab.active} $plain={tab.plain}>
                <SmallIcon viewBox="0 0 16 16">{BAR_ICONS[tab.icon]}</SmallIcon>
                {tab.label}
              </BottomTab>
            ))}
          </BottomTabs>
          <BottomEdge />
        </BottomMain>
      </BottomBar>

      <Overlay viewBox="0 0 861 725">
        <rect x="64" y="293.5" width="86" height="67" fill="none" stroke="#0a0a8c" strokeWidth="3" />
        <polygon points="163,310 175,296 181,300 260,268 385,217.5 385,219 260,275.5 187,306 182,311" fill="#e01820" />
      </Overlay>
    </Screen>
  );
}
